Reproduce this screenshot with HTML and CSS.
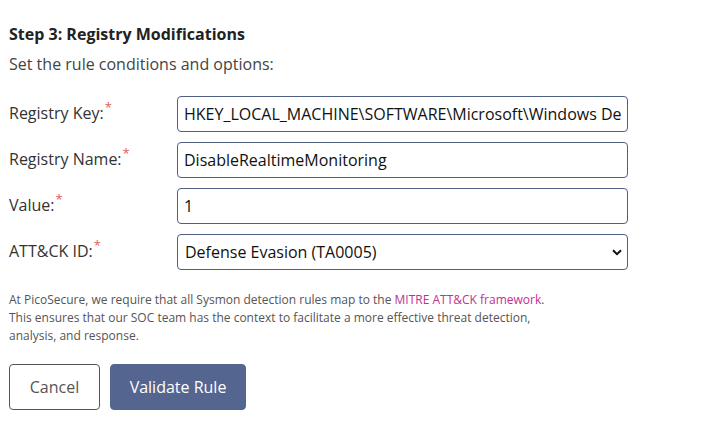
FILE: index.html
```html
<!DOCTYPE html>
<html>
<head>
<meta charset="utf-8">
<link rel="stylesheet" href="styles.css">
</head>
<body>
<div class="page">
  <h3 class="title">Step 3: Registry Modifications</h3>
  <p class="subtitle">Set the rule conditions and options:</p>
  <form class="form">
    <label class="label">Registry Key:<span class="req">*</span></label>
    <input class="field" type="text" value="HKEY_LOCAL_MACHINE\SOFTWARE\Microsoft\Windows Defender\Real-Time Protection">
    <label class="label">Registry Name:<span class="req">*</span></label>
    <input class="field" type="text" value="DisableRealtimeMonitoring">
    <label class="label">Value:<span class="req">*</span></label>
    <input class="field" type="text" value="1">
    <label class="label">ATT&amp;CK ID:<span class="req">*</span></label>
    <div class="select-wrap">
      <select class="field select">
        <option>Defense Evasion (TA0005)</option>
      </select>
      <svg class="chev" width="10" height="7" viewBox="0 0 10 7"><path d="M1 1.2 L5 5.2 L9 1.2" fill="none" stroke="#111" stroke-width="2"/></svg>
    </div>
  </form>
  <p class="note">At PicoSecure, we require that all Sysmon detection rules map to the <a class="link" href="#">MITRE ATT&amp;CK framework</a>.<br>This ensures that our SOC team has the context to facilitate a more effective threat detection,<br>analysis, and response.</p>
  <div class="actions">
    <button class="btn btn-cancel" type="button">Cancel</button>
    <button class="btn btn-primary" type="button">Validate Rule</button>
  </div>
</div>
</body>
</html>
```
FILE: styles.css
```css
html, body { margin: 0; padding: 0; background: #fff; }
body { font-family: "Open Sans", "Noto Sans", sans-serif; color: #333; }
.page { padding: 22px 9px 0 9px; }
.title { margin: 0; font-size: 16px; font-weight: 700; line-height: 24px; color: #222; }
.subtitle { margin: 6px 0 0 0; font-size: 16px; line-height: 24px; color: #444; }
.form {
  margin-top: 20px;
  display: grid;
  grid-template-columns: 168px 451px;
  row-gap: 10px;
  align-items: start;
}
.label { font-size: 16px; line-height: 16px; color: #333; padding-top: 3px; }
.req { color: #e0605a; font-size: 13px; vertical-align: 7px; margin-left: 1px; }
.field {
  box-sizing: border-box;
  width: 451px;
  height: 36px;
  border: 1px solid #4f5f82;
  border-radius: 4px;
  padding: 0 6px;
  font-family: "Open Sans", "Noto Sans", sans-serif;
  font-size: 16px;
  color: #111;
  background: #fff;
  outline: none;
}
.select-wrap { position: relative; width: 451px; }
.select { appearance: none; -webkit-appearance: none; padding-left: 7px; }
.chev { position: absolute; right: 6px; top: 15px; pointer-events: none; }
.note { margin: 21px 0 0 0; font-size: 12px; line-height: 18px; color: #555; }
.link { color: #c2308f; text-decoration: none; }
.actions { margin-top: 19px; display: flex; gap: 10px; }
.btn {
  box-sizing: border-box;
  height: 46px;
  border-radius: 4px;
  font-family: "Open Sans", "Noto Sans", sans-serif;
  font-size: 16px;
  padding: 0;
  white-space: nowrap;
}
.btn-cancel { width: 91px; background: #fff; border: 1px solid #555; color: #555; }
.btn-primary { width: 136px; background: #546590; border: 1px solid #546590; color: #fff; }
```
